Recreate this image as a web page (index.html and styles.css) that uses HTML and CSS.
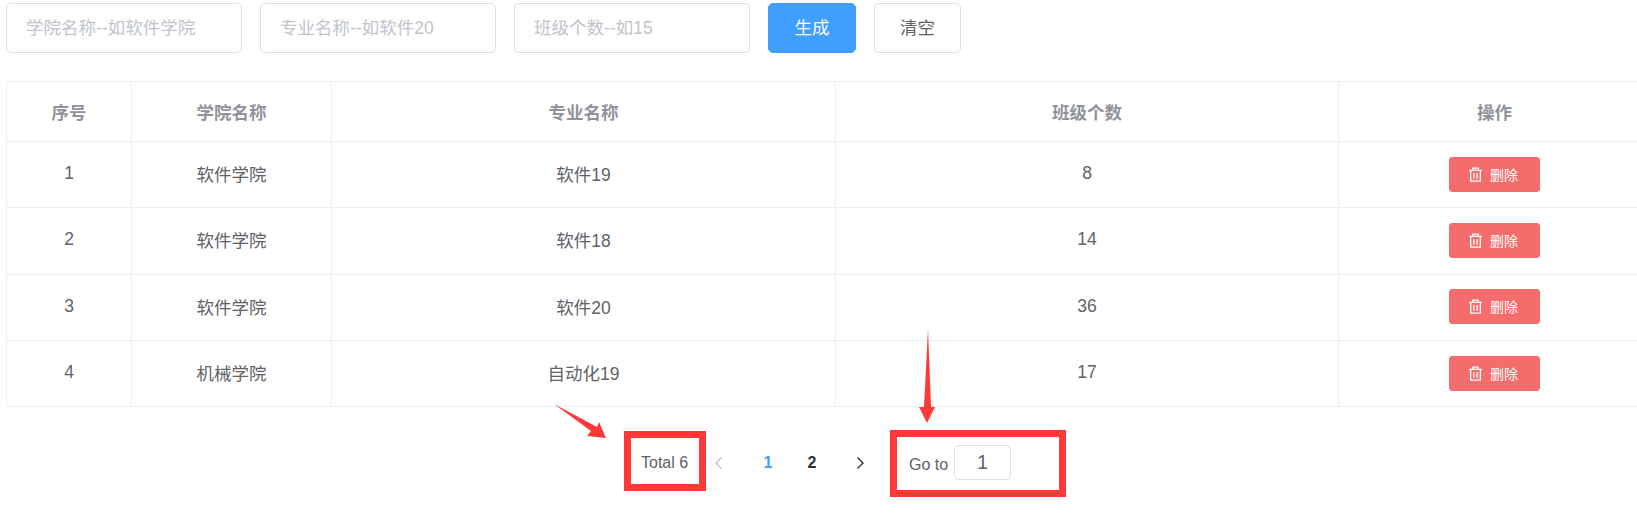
FILE: index.html
```html
<!DOCTYPE html>
<html lang="zh-CN">
<head>
    <meta charset="UTF-8">
    <title>班级生成</title>
    <link rel="stylesheet" href="styles.css">
</head>
<body>
    <div class="toolbar">
        <input class="field" type="text" placeholder="学院名称--如软件学院">
        <input class="field" type="text" placeholder="专业名称--如软件20">
        <input class="field" type="text" placeholder="班级个数--如15">
        <button class="btn btn-primary">生成</button>
        <button class="btn btn-plain">清空</button>
    </div>

    <table class="data-table">
        <colgroup>
            <col class="col-index">
            <col class="col-college">
            <col class="col-major">
            <col class="col-count">
            <col class="col-action">
        </colgroup>
        <thead>
            <tr><th>序号</th><th>学院名称</th><th>专业名称</th><th>班级个数</th><th>操作</th></tr>
        </thead>
        <tbody>
            <tr>
                <td>1</td><td>软件学院</td><td>软件19</td><td>8</td>
                <td><button class="btn-delete"><svg class="trash" viewBox="0 0 14 14"><path d="M1 3.2h12M4.500 3V1h5v2M2.500 3.200v10h9v-10M5.500 5.500v5.500M8.500 5.500v5.500"/></svg>删除</button></td>
            </tr>
            <tr>
                <td>2</td><td>软件学院</td><td>软件18</td><td>14</td>
                <td><button class="btn-delete"><svg class="trash" viewBox="0 0 14 14"><path d="M1 3.2h12M4.500 3V1h5v2M2.500 3.200v10h9v-10M5.500 5.500v5.500M8.500 5.500v5.500"/></svg>删除</button></td>
            </tr>
            <tr>
                <td>3</td><td>软件学院</td><td>软件20</td><td>36</td>
                <td><button class="btn-delete"><svg class="trash" viewBox="0 0 14 14"><path d="M1 3.2h12M4.500 3V1h5v2M2.500 3.200v10h9v-10M5.500 5.500v5.500M8.500 5.500v5.500"/></svg>删除</button></td>
            </tr>
            <tr>
                <td>4</td><td>机械学院</td><td>自动化19</td><td>17</td>
                <td><button class="btn-delete"><svg class="trash" viewBox="0 0 14 14"><path d="M1 3.2h12M4.500 3V1h5v2M2.500 3.200v10h9v-10M5.500 5.500v5.500M8.500 5.500v5.500"/></svg>删除</button></td>
            </tr>
        </tbody>
    </table>

    <div class="pager">
        <span class="total">Total 6</span>
        <span class="page-arrow prev"><svg viewBox="0 0 10 14"><path d="M7.500 1.500L2 7l5.500 5.500"/></svg></span>
        <span class="page-num active">1</span>
        <span class="page-num">2</span>
        <span class="page-arrow next"><svg viewBox="0 0 10 14"><path d="M2.500 1.500L8 7l-5.500 5.500"/></svg></span>
        <span class="goto">Go to</span>
        <input class="goto-input" type="text" value="1">
    </div>

    <!-- red annotations drawn over the screenshot -->
    <div class="mark mark-total"></div>
    <div class="mark mark-goto"></div>
    <svg class="arrows" viewBox="0 0 1637 517">
        <polygon points="554,404 597,427 599,422 606,438 587,436 591,431"/>
        <polygon points="928,329 931,407 935,407 927,423 919,407 924,407"/>
    </svg>
</body>
</html>
```

FILE: styles.css
```css
html, body { margin: 0; padding: 0; }
body { width: 1637px; height: 517px; overflow: hidden; position: relative; background: #fff; font-family: "Liberation Sans", "Noto Sans CJK SC", sans-serif; color: #606266; }

.toolbar { display: flex; padding: 3px 0 0 6px; height: 50px; }
.field { box-sizing: border-box; width: 236px; height: 50px; margin-right: 18px; padding: 0 19px; border: 1px solid #dcdfe6; border-radius: 5px; font: 17.5px "Liberation Sans", "Noto Sans CJK SC", sans-serif; color: #606266; outline: none; }
.field::placeholder { color: #c0c4cc; }
.btn { box-sizing: border-box; height: 50px; border-radius: 5px; font: 17.5px "Liberation Sans", "Noto Sans CJK SC", sans-serif; padding: 0 0 3px; }
.btn-primary { width: 88px; background: #409eff; border: 1px solid #409eff; color: #fff; margin-right: 18px; }
.btn-plain { width: 87px; background: #fff; border: 1px solid #dcdfe6; color: #606266; }

.data-table { margin: 28px 0 0 6px; width: 1660px; table-layout: fixed; border-collapse: collapse; font-size: 17.5px; }
.col-index { width: 125px; }
.col-college { width: 200px; }
.col-major { width: 504px; }
.col-count { width: 503px; }
.col-action { width: 328px; }
.data-table th, .data-table td { border: 1px solid #ebeef5; padding: 0; text-align: center; }
.data-table td { height: 66.33px; padding-bottom: 2px; box-sizing: border-box; }
.data-table th { height: 59px; color: #909399; font-weight: bold; }
.data-table td:last-child, .data-table th:last-child { text-align: left; }
.data-table th:last-child { padding-left: 138px; }
.data-table td:last-child { padding-left: 110px; padding-bottom: 1px; }

.btn-delete { display: flex; align-items: center; box-sizing: border-box; width: 91px; height: 35px; padding: 0 0 1px 18px; background: #f56c6c; border: 1px solid #f56c6c; border-radius: 3px; color: #fff; font: 14px "Liberation Sans", "Noto Sans CJK SC", sans-serif; }
.trash { width: 15px; height: 15px; margin: 1px 7px 0 0; fill: none; stroke: #fff; stroke-width: 1.2; }

.pager { display: flex; align-items: center; height: 40px; margin: 36px 0 0 641px; font-size: 16px; }
.total { width: 47px; margin-right: 26px; white-space: nowrap; }
.page-arrow { display: flex; width: 10px; }
.page-arrow svg { width: 10px; height: 14px; fill: none; stroke-width: 1.4; }
.prev svg { stroke: #c0c4cc; }
.next svg { stroke: #303133; }
.page-num { width: 44px; text-align: center; font-weight: bold; color: #303133; }
.page-num.active { color: #409eff; }
.prev { margin-right: 22px; }
.next { margin-left: 21px; margin-right: 44px; }
.goto { margin-top: 3px; margin-right: 6px; width: 39px; white-space: nowrap; }
.goto-input { box-sizing: border-box; width: 57px; height: 35px; margin-bottom: 2px; border: 1px solid #dcdfe6; border-radius: 5px; text-align: center; font: 20px "Liberation Sans", sans-serif; color: #606266; outline: none; padding: 0; }

.mark { position: absolute; box-sizing: border-box; border: 7px solid #ff3838; }
.mark-total { left: 624px; top: 431px; width: 82px; height: 60px; }
.mark-goto { left: 890px; top: 430px; width: 176px; height: 67px; }
.arrows { position: absolute; left: 0; top: 0; width: 1637px; height: 517px; fill: #ff3838; }
```
